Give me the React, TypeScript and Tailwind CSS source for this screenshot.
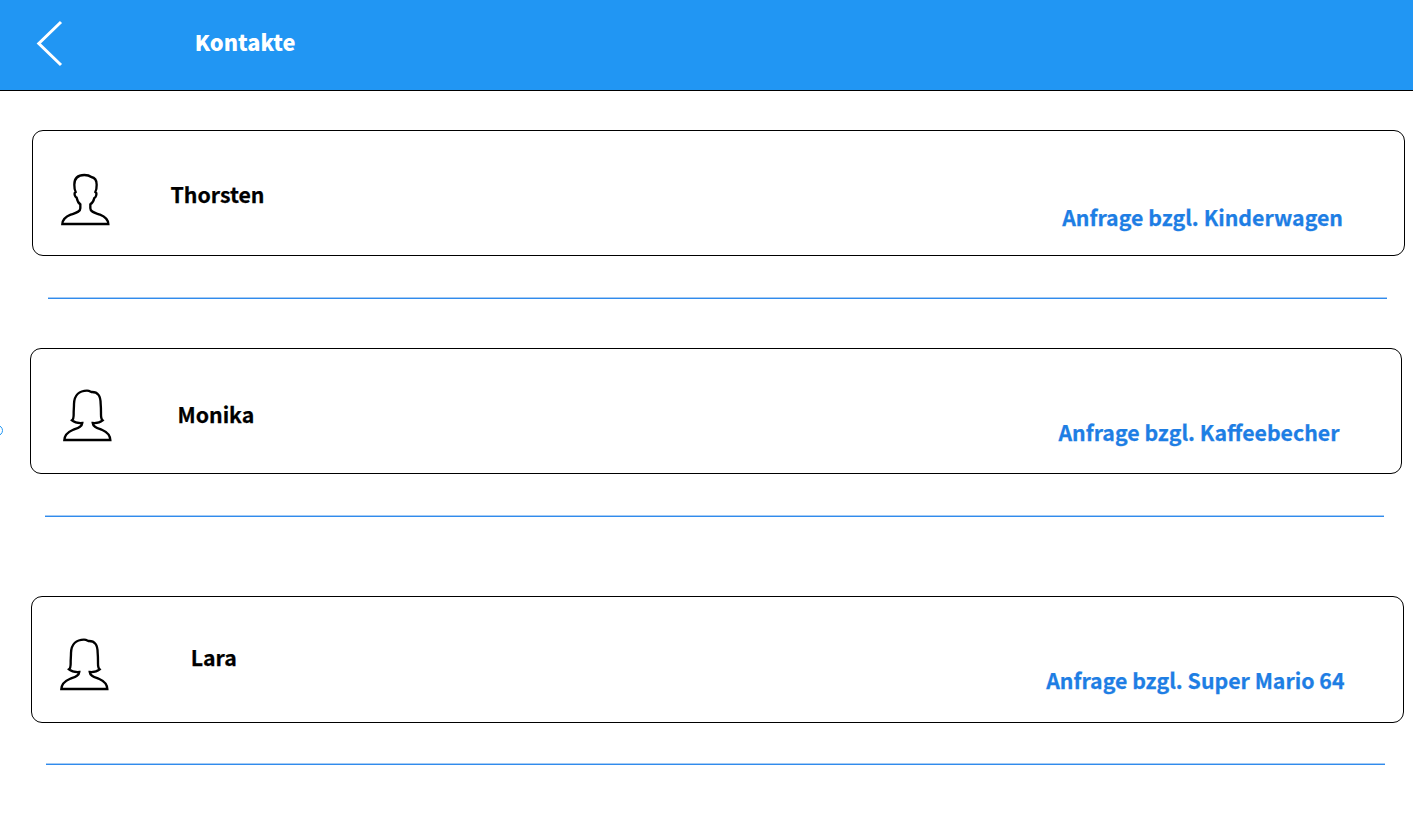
type Contact = {
  name: string;
  request: string;
  female: boolean;
  card: string;
  icon: string;
  nameBox: string;
  requestBox: string;
  divider: string;
};

const contacts: Contact[] = [
  {
    name: 'Thorsten',
    request: 'Anfrage bzgl. Kinderwagen',
    female: false,
    card: 'mt-[39px] ml-[32px] h-[126px] w-[1373px]',
    icon: 'mt-[34px] ml-[17px]',
    nameBox: 'mt-[48px] ml-[50.5px]',
    requestBox: 'mt-[71px] mr-[61px]',
    divider: 'mt-[41px] ml-[48px] w-[1339.4px]',
  },
  {
    name: 'Monika',
    request: 'Anfrage bzgl. Kaffeebecher',
    female: true,
    card: 'mt-[49px] ml-[30px] h-[126px] w-[1372px]',
    icon: 'mt-[31px] ml-[19px]',
    nameBox: 'mt-[50px] ml-[57.5px]',
    requestBox: 'mt-[68px] mr-[61.5px]',
    divider: 'mt-[41px] ml-[45px] w-[1339.4px]',
  },
  {
    name: 'Lara',
    request: 'Anfrage bzgl. Super Mario 64',
    female: true,
    card: 'mt-[79px] ml-[31px] h-[127px] w-[1373px]',
    icon: 'mt-[32px] ml-[15px]',
    nameBox: 'mt-[45px] ml-[73.7px]',
    requestBox: 'mt-[68px] mr-[58.5px]',
    divider: 'mt-[40px] ml-[46px] w-[1339.4px]',
  },
];

const MALE =
  'M37 177C38 162 47 155 62 149C76 144 91 142 91 130V118C85 114 82 108 80 98C75 97 73 88 74 84L77 81C74 76 73 67 73 59C73 40 84 30 103 30C114 30 119 32 124 36C136 38 140 47 140 59C140 67 139 76 136 81L139 84C140 88 138 97 133 99C131 108 128 114 121 118V130C121 142 136 144 150 149C165 155 174 162 175 177Z';
const FEMALE =
  'M43 180C44 164 54 156 68 150C83 144 96 141 97 129C84 130 73 127 66 121C72 117 71 107 71 98C71 90 72 83 72 72C73 45 89 32 111 32C117 32 120 34 124 36C144 35 152 48 152 72C153 83 153 90 153 98C153 108 152 116 158 121C151 127 140 130 128 129C129 141 142 144 157 150C171 156 180 164 181 180Z';

function Avatar({ female, className }: { female: boolean; className: string }) {
  return (
    <svg viewBox="0 0 210 210" className={`h-[70px] w-[70px] shrink-0 ${className}`} fill="none" stroke="#000" strokeWidth="7">
      {female ? <path d={FEMALE} /> : <path d={MALE} />}
    </svg>
  );
}

export default function App() {
  return (
    <div className="relative h-[832px] w-[1413px] overflow-hidden bg-white font-['Noto_Sans_CJK_SC',sans-serif] text-[21.3px] leading-[30px] font-bold whitespace-nowrap text-black [-webkit-text-stroke:0.25px_currentColor]">
      <header className="flex h-[91px] items-start border-b border-black bg-[#2196f3] text-white">
        <svg viewBox="0 0 30 50" className="mt-[19px] ml-[35px] h-[50px] w-[30px]" fill="none" stroke="white" strokeWidth="3">
          <path d="M26 3L3.8 24.5L26 46" />
        </svg>
        <h1 className="mt-[27px] ml-[129.8px] text-[21.8px] font-black [-webkit-text-stroke:0]">Kontakte</h1>
      </header>
      <main>
        {contacts.map((c) => (
          <section key={c.name} className="flex flex-col">
            <div className={`flex items-start rounded-[11px] border border-black ${c.card}`}>
              <Avatar female={c.female} className={c.icon} />
              <h2 className={c.nameBox}>{c.name}</h2>
              <p className={`ml-auto text-[#1e7ee4] ${c.requestBox}`}>{c.request}</p>
            </div>
            <div className={`h-[2px] border-t border-[#a5cbf4] bg-[#308bed] ${c.divider}`} />
          </section>
        ))}
      </main>
      <span className="absolute top-[425px] left-[-8px] h-[11px] w-[11px] rounded-full border border-[#2196f3]" />
    </div>
  );
}
